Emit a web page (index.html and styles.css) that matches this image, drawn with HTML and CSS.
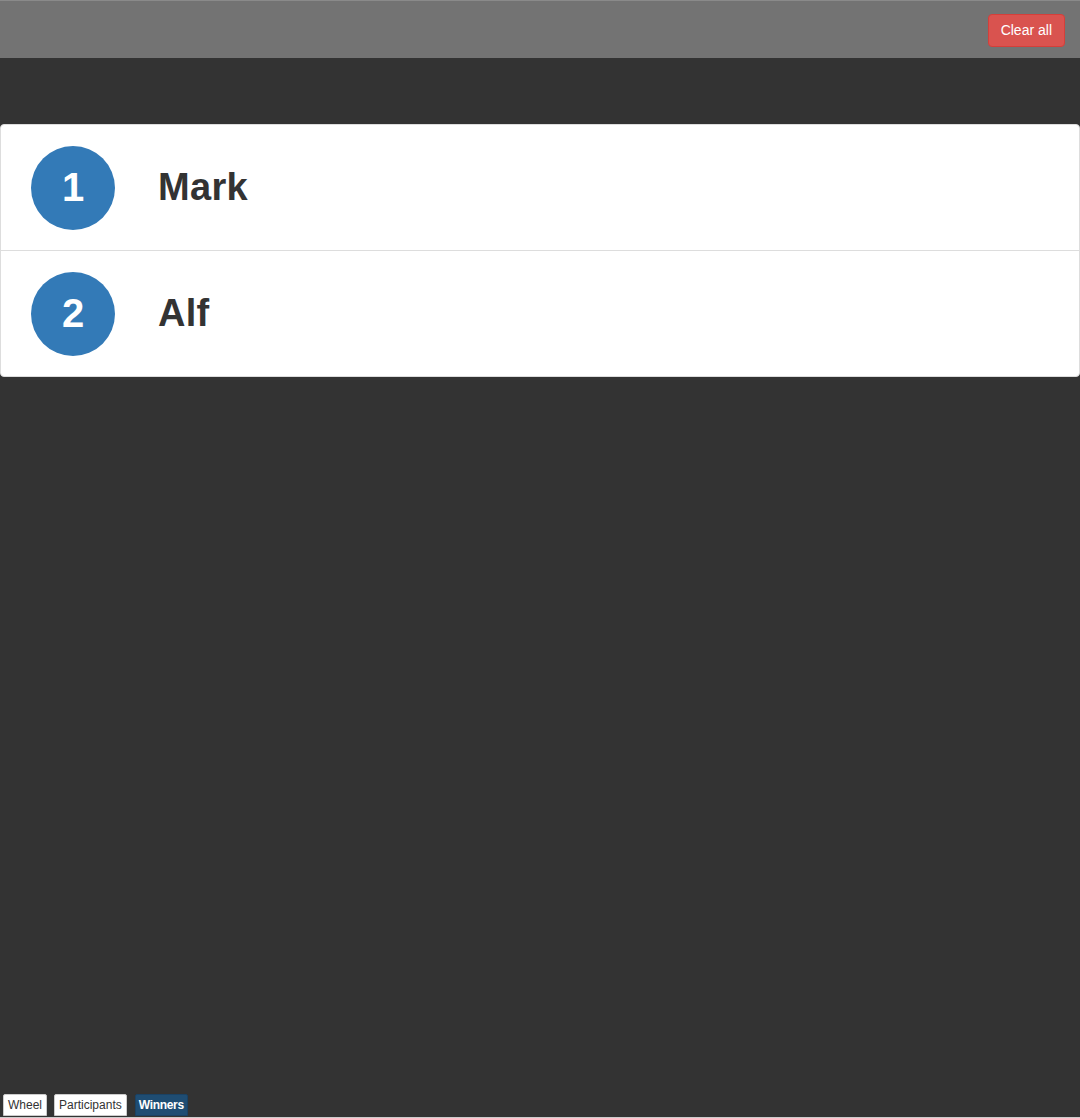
FILE: index.html
```html
<!DOCTYPE html>
<html>
<head>
<meta charset="utf-8">
<link rel="stylesheet" href="styles.css">
</head>
<body>
<div class="app">
  <header class="topbar">
    <button class="btn-clear">Clear all</button>
  </header>
  <main class="content">
    <ul class="winners">
      <li class="winner"><span class="badge">1</span><span class="name">Mark</span></li>
      <li class="winner"><span class="badge">2</span><span class="name">Alf</span></li>
    </ul>
  </main>
  <nav class="tabs">
    <button class="tab">Wheel</button>
    <button class="tab">Participants</button>
    <button class="tab active">Winners</button>
  </nav>
</div>
</body>
</html>
```
FILE: styles.css
```css
html, body {
  margin: 0;
  padding: 0;
  height: 100%;
}
body {
  background: #333333;
  font-family: "Liberation Sans", Arial, Helvetica, sans-serif;
  color: #333333;
}
.app {
  height: 1118px;
  display: flex;
  flex-direction: column;
}
.topbar {
  height: 58px;
  box-sizing: border-box;
  background: #737373;
  border-top: 1px solid #8a8a8a;
  display: flex;
  justify-content: flex-end;
  align-items: flex-start;
  padding: 13px 15px 0 0;
}
.btn-clear {
  background: #d9534f;
  border: 1px solid #d43f3a;
  color: #ffffff;
  font-family: "Liberation Sans", Arial, Helvetica, sans-serif;
  font-size: 14px;
  height: 33px;
  padding: 0 12px;
  border-radius: 4px;
  line-height: 31px;
}
.content {
  flex: 1;
  padding-top: 66px;
}
.winners {
  list-style: none;
  margin: 0;
  padding: 0;
  background: #ffffff;
  border: 1px solid #dddddd;
  border-radius: 4px;
}
.winner {
  height: 125px;
  display: flex;
  align-items: center;
  padding-left: 30px;
  box-sizing: border-box;
}
.winner + .winner {
  border-top: 1px solid #dddddd;
  height: 126px;
}
.badge {
  width: 84px;
  height: 84px;
  border-radius: 50%;
  background: #337ab7;
  color: #ffffff;
  font-weight: bold;
  font-size: 40px;
  display: flex;
  align-items: center;
  justify-content: center;
}
.name {
  margin-left: 43px;
  font-size: 38px;
  font-weight: bold;
  color: #333333;
  letter-spacing: 0.3px;
}
.tabs {
  display: flex;
  gap: 6px;
  padding: 0 0 1px 3px;
  border-bottom: 1px solid #cccccc;
  align-items: flex-end;
}
.tab {
  font-family: "Liberation Sans", Arial, Helvetica, sans-serif;
  font-size: 12px;
  height: 22px;
  padding: 0 4px;
  background: #ffffff;
  color: #333333;
  border: 1px solid #cccccc;
  border-radius: 2px 2px 0 0;
  margin: 0;
}
.tab + .tab {
  margin-left: 1px;
}
.tab.active {
  margin-left: 2px;
  padding: 0 3px;
  background: #1f4d73;
  border-color: #1a4264;
  color: #ffffff;
  font-weight: bold;
  letter-spacing: -0.3px;
}
```
